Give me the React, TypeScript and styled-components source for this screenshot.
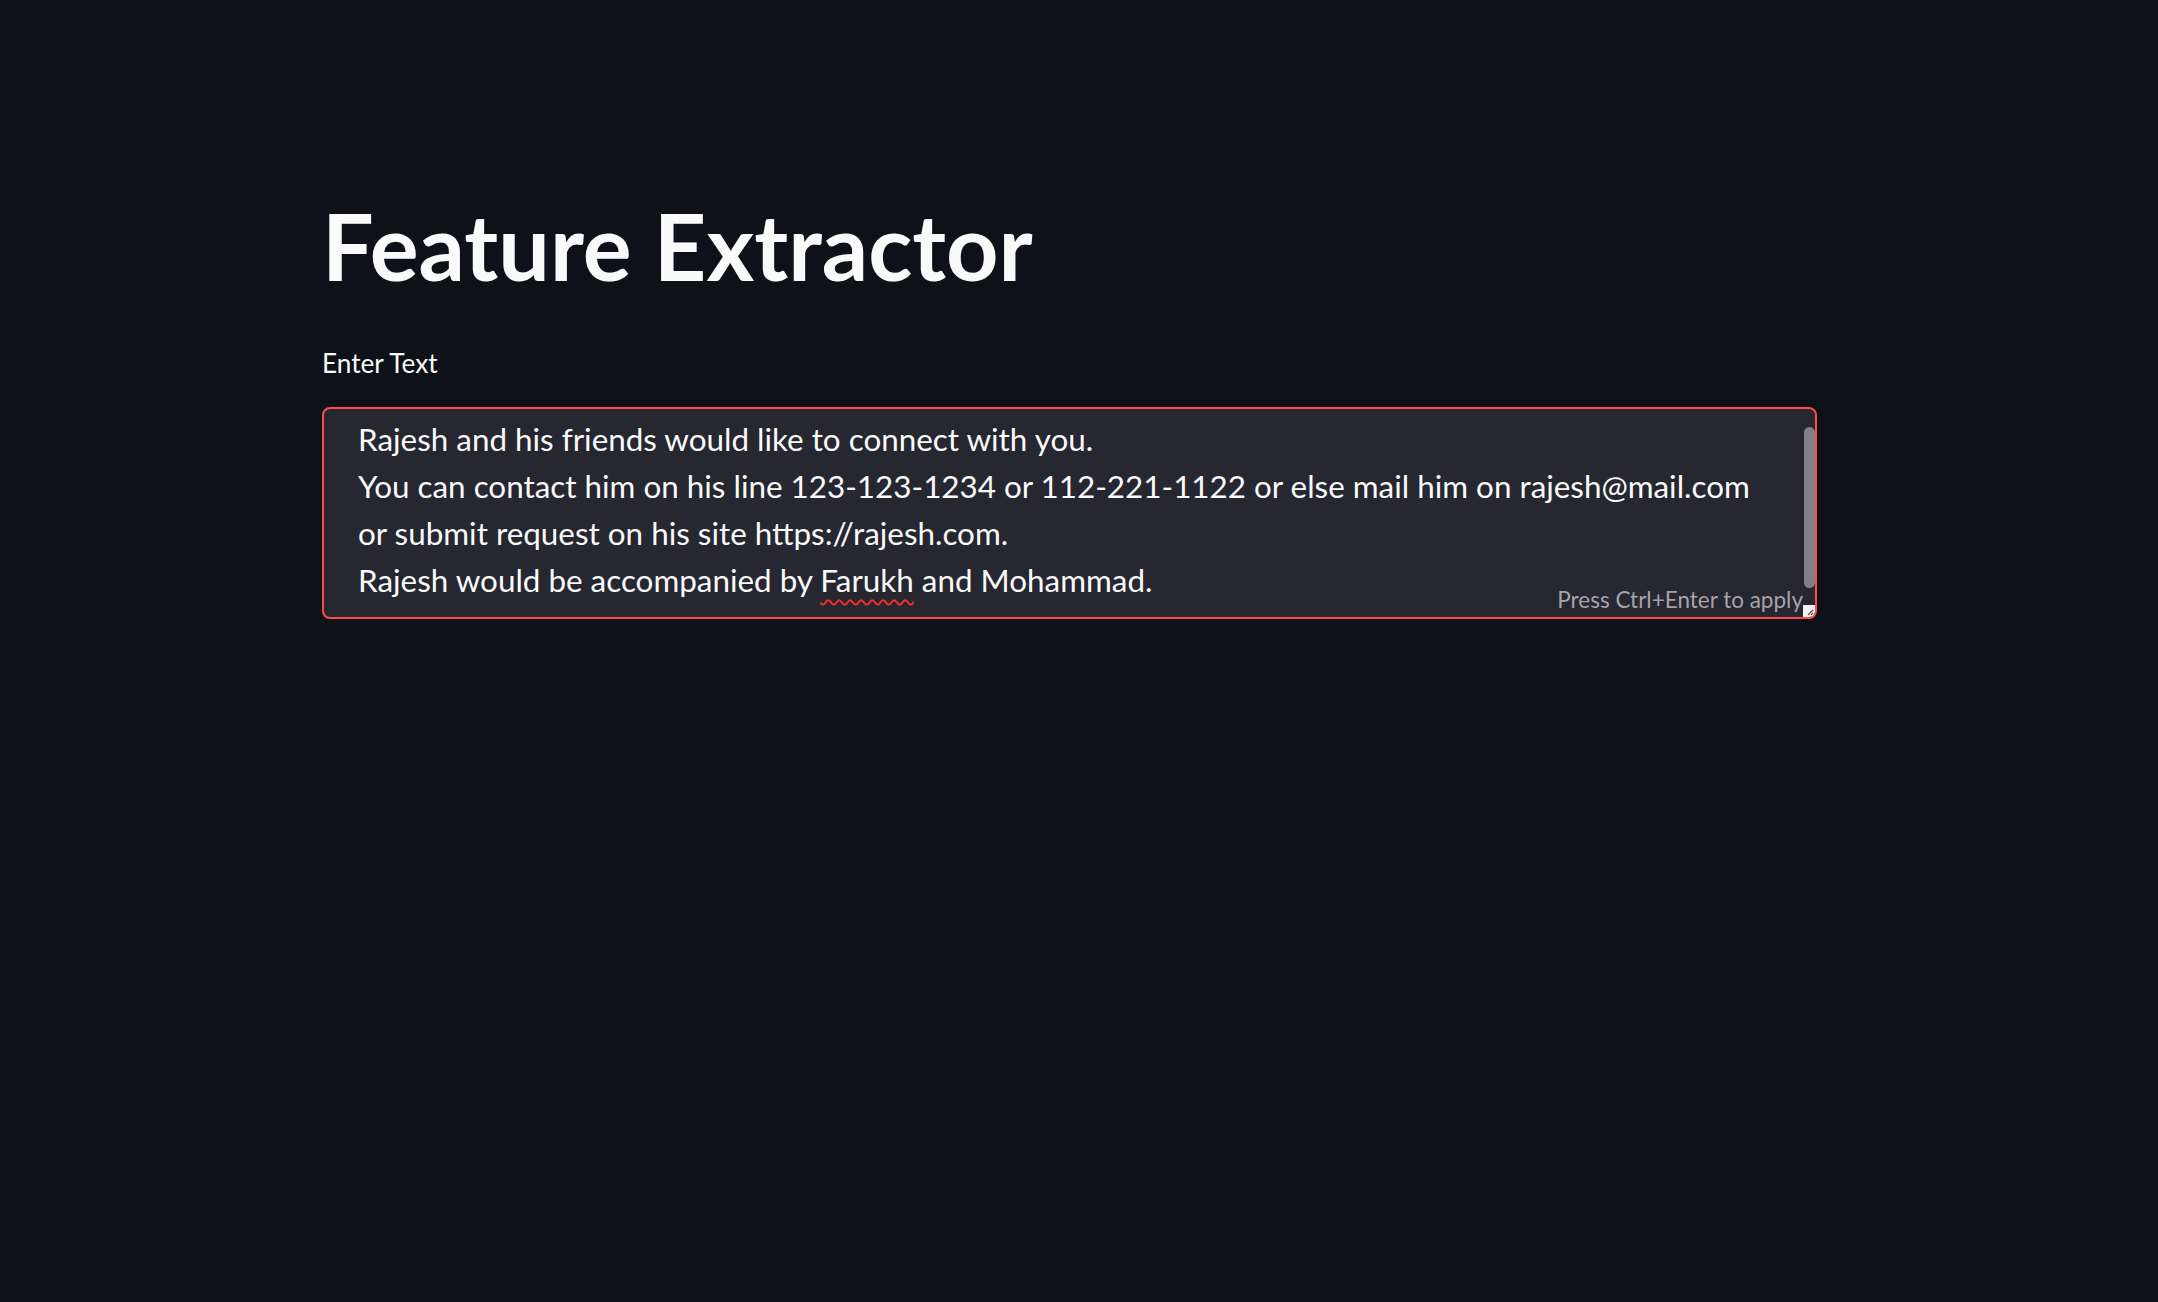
import React from "react";
import styled, { createGlobalStyle } from "styled-components";

const GlobalStyle = createGlobalStyle`
  html, body {
    margin: 0;
    padding: 0;
    background: #0e1117;
  }
  body {
    font-family: Lato, "Noto Sans", sans-serif;
    color: #fafafa;
  }
`;

const Main = styled.main`
  width: 1495px;
  margin-left: 322px;
  padding-top: 191px;
  min-height: 100vh;
  box-sizing: border-box;
`;

const Title = styled.h1`
  margin: 0;
  font-size: 91.5px;
  font-weight: 700;
  line-height: 1.2;
  color: #fafafa;
`;

const Field = styled.div`
  display: flex;
  flex-direction: column;
  margin-top: 47px;
`;

const Label = styled.label`
  font-size: 26.2px;
  line-height: 30px;
  margin-bottom: 29px;
  color: #fafafa;
`;

const TextBox = styled.div`
  position: relative;
  height: 212px;
  box-sizing: border-box;
  border: 2px solid #ff4b4b;
  border-radius: 8px;
  background: #262730;
  overflow: hidden;
`;

const TextContent = styled.div`
  padding: 7px 60px 0 34px;
  font-size: 31.4px;
  line-height: 47px;
  color: #fafafa;
  white-space: nowrap;
`;

const Line = styled.div``;

const Misspelled = styled.span`
  text-decoration: underline wavy #ff2a2a;
  text-decoration-thickness: 1.5px;
  text-underline-offset: 7px;
`;

const ScrollThumb = styled.div`
  position: absolute;
  top: 18px;
  right: 0;
  width: 11px;
  height: 161px;
  border-radius: 6px;
  background: #818087;
`;

const Hint = styled.div`
  position: absolute;
  right: 12px;
  bottom: 6px;
  font-size: 22.5px;
  line-height: 23px;
  color: #a4a4a8;
`;

const Resizer = styled.div`
  position: absolute;
  right: 0;
  bottom: 0;
  width: 12px;
  height: 12px;
  background: #f2f2f2;
  display: flex;
  align-items: flex-end;
  justify-content: flex-end;
`;

const ResizeGrip = () => (
  <svg width="12" height="12" viewBox="0 0 12 12">
    <path d="M10 5 L5 10 M10 8 L8 10" stroke="#555" strokeWidth="1.2" />
  </svg>
);

export default function App() {
  return (
    <>
      <GlobalStyle />
      <Main>
        <Title>Feature Extractor</Title>
        <Field>
          <Label>Enter Text</Label>
          <TextBox>
            <TextContent>
              <Line>Rajesh and his friends would like to connect with you.</Line>
              <Line>
                You can contact him on his line 123-123-1234 or 112-221-1122 or else mail him on rajesh@mail.com
              </Line>
              <Line>or submit request on his site https://rajesh.com.</Line>
              <Line>
                Rajesh would be accompanied by <Misspelled>Farukh</Misspelled> and Mohammad.
              </Line>
            </TextContent>
            <ScrollThumb />
            <Hint>Press Ctrl+Enter to apply</Hint>
            <Resizer>
              <ResizeGrip />
            </Resizer>
          </TextBox>
        </Field>
      </Main>
    </>
  );
}
